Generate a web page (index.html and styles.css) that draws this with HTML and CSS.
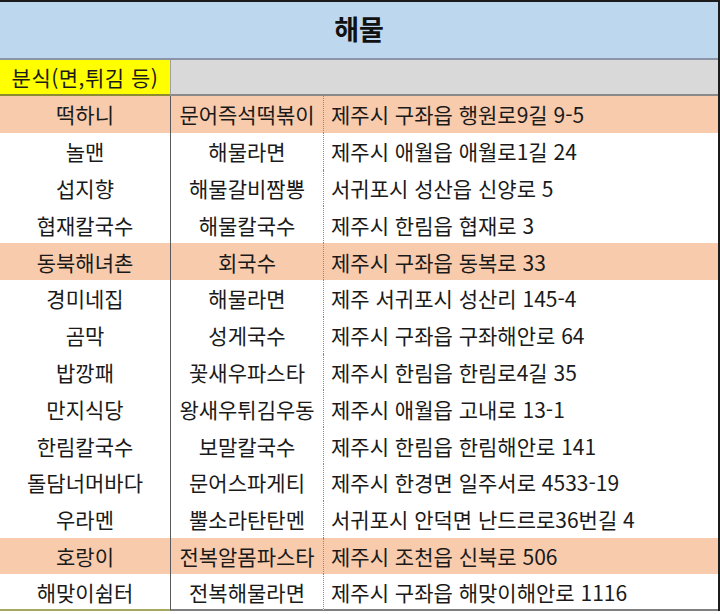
FILE: index.html
```html
<!DOCTYPE html>
<html lang="ko">
<head>
<meta charset="utf-8">
<link rel="stylesheet" href="styles.css">
</head>
<body>
<div class="sheet">
  <div class="title">해물</div>
  <div class="cat">
    <div class="cat-label">분식(면,튀김 등)</div>
    <div class="cat-fill"></div>
  </div>
  <div class="row hl"><div class="c1">떡하니</div><div class="c2">문어즉석떡볶이</div><div class="c3">제주시 구좌읍 행원로9길 9-5</div></div>
  <div class="row"><div class="c1">놀맨</div><div class="c2">해물라면</div><div class="c3">제주시 애월읍 애월로1길 24</div></div>
  <div class="row"><div class="c1">섭지향</div><div class="c2">해물갈비짬뽕</div><div class="c3">서귀포시 성산읍 신양로 5</div></div>
  <div class="row"><div class="c1">협재칼국수</div><div class="c2">해물칼국수</div><div class="c3">제주시 한림읍 협재로 3</div></div>
  <div class="row hl"><div class="c1">동북해녀촌</div><div class="c2">회국수</div><div class="c3">제주시 구좌읍 동복로 33</div></div>
  <div class="row"><div class="c1">경미네집</div><div class="c2">해물라면</div><div class="c3">제주 서귀포시 성산리 145-4</div></div>
  <div class="row"><div class="c1">곰막</div><div class="c2">성게국수</div><div class="c3">제주시 구좌읍 구좌해안로 64</div></div>
  <div class="row"><div class="c1">밥깡패</div><div class="c2">꽃새우파스타</div><div class="c3">제주시 한림읍 한림로4길 35</div></div>
  <div class="row"><div class="c1">만지식당</div><div class="c2">왕새우튀김우동</div><div class="c3">제주시 애월읍 고내로 13-1</div></div>
  <div class="row"><div class="c1">한림칼국수</div><div class="c2">보말칼국수</div><div class="c3">제주시 한림읍 한림해안로 141</div></div>
  <div class="row"><div class="c1">돌담너머바다</div><div class="c2">문어스파게티</div><div class="c3">제주시 한경면 일주서로 4533-19</div></div>
  <div class="row"><div class="c1">우라멘</div><div class="c2">뿔소라탄탄멘</div><div class="c3">서귀포시 안덕면 난드르로36번길 4</div></div>
  <div class="row hl"><div class="c1">호랑이</div><div class="c2">전복알몸파스타</div><div class="c3">제주시 조천읍 신북로 506</div></div>
  <div class="row last"><div class="c1">해맞이쉼터</div><div class="c2">전복해물라면</div><div class="c3">제주시 구좌읍 해맞이해안로 1116</div></div>
</div>
</body>
</html>
```
FILE: styles.css
```css
html, body {
  margin: 0;
  padding: 0;
  background: #ffffff;
}
body {
  width: 720px;
  height: 614px;
  overflow: hidden;
  font-family: "Noto Sans CJK KR", "Noto Sans", sans-serif;
  color: #1a1a1a;
}
.sheet {
  width: 718px;
  border-top: 2px solid #1c1c1c;
  border-right: 2px solid #1c1c1c;
}
.title {
  height: 52px;
  padding-bottom: 4px;
  background: #bdd7ee;
  border-bottom: 2px solid #8a94a6;
  display: flex;
  align-items: center;
  justify-content: center;
  font-size: 27px;
  font-weight: 700;
  color: #111;
}
.cat {
  display: grid;
  grid-template-columns: 170px 1fr;
  height: 36px;
}
.cat-label {
  background: #ffff00;
  border-bottom: 2px solid #8c8c30;
  display: flex;
  align-items: center;
  justify-content: center;
  font-size: 21px;
  letter-spacing: 0.5px;
}
.cat-fill {
  background: #d9d9d9;
  border-left: 1px solid #a0a0a0;
  border-bottom: 2px solid #8a8a8a;
}
.row {
  display: grid;
  grid-template-columns: 170px 153px 1fr;
  height: 36.8px;
  font-size: 21px;
}
.row.hl {
  background: #f8cbad;
}
.row > div {
  display: flex;
  align-items: center;
  white-space: nowrap;
}
.c1 {
  justify-content: center;
}
.c2 {
  justify-content: center;
  border-left: 1px solid #5a5a5a;
}
.c3 {
  border-left: 1px dotted #8a8a8a;
  padding-left: 7px;
}
.row.last > div {
  border-bottom: 2px solid #808080;
}
.row.last > .c1 {
  border-bottom-color: #a8a860;
}
```
